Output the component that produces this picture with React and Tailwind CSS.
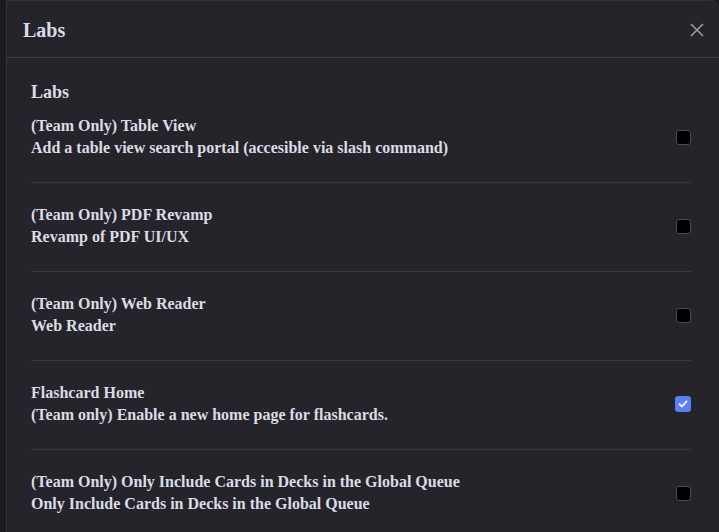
import React from "react";

const rows = [
  { t: "(Team Only) Table View", d: "Add a table view search portal (accesible via slash command)", c: false },
  { t: "(Team Only) PDF Revamp", d: "Revamp of PDF UI/UX", c: false },
  { t: "(Team Only) Web Reader", d: "Web Reader", c: false },
  { t: "Flashcard Home", d: "(Team only) Enable a new home page for flashcards.", c: true },
  { t: "(Team Only) Only Include Cards in Decks in the Global Queue", d: "Only Include Cards in Decks in the Global Queue", c: false },
];

function Box({ checked }) {
  if (checked)
    return (
      <div className="w-[16px] h-[16px] rounded-[3px] bg-[#5b7ff7] flex items-center justify-center shrink-0">
        <svg width="10" height="10" viewBox="0 0 10 10" fill="none">
          <path d="M1.5 5.2 L4 7.5 L8.5 2.5" stroke="white" strokeWidth="1.8" strokeLinecap="round" strokeLinejoin="round" />
        </svg>
      </div>
    );
  return <div className="w-[15px] h-[15px] rounded-[3px] bg-black border border-[#4a4a50] shrink-0" />;
}

export default function App() {
  return (
    <div className="h-[532px] overflow-hidden bg-[#1c1b21] pl-[6px]" style={{ fontFamily: '"Liberation Serif", serif' }}>
      <div className="h-full border-l border-t border-[#34333a] bg-[#25242b] rounded-tr-lg text-[#dadce5] font-bold">
        <div className="h-[57px] border-b border-[#3a3940] flex items-center justify-between pl-[16px] pr-[15px]">
          <div className="text-[20px] leading-[24px] mt-[1px]">Labs</div>
          <svg width="14" height="14" viewBox="0 0 14 14" className="mt-[1px]">
            <path d="M1 1 L13 13 M13 1 L1 13" stroke="#9b9ba2" strokeWidth="1.6" />
          </svg>
        </div>
        <div className="pl-[24px] pr-[28px] pt-[22px]">
          <div className="text-[18px] leading-[24px] mb-[11px]">Labs</div>
          {rows.map((r, i) => (
            <div
              key={i}
              className={
                "flex items-center justify-between pb-[23px] " +
                (i === 0 ? "pt-0 " : "pt-[21px] ") +
                (i < rows.length - 1 ? "border-b border-[#38373e]" : "")
              }
            >
              <div className="text-[16px] leading-[22px]">
                <div>{r.t}</div>
                <div>{r.d}</div>
              </div>
              <Box checked={r.c} />
            </div>
          ))}
        </div>
      </div>
    </div>
  );
}
